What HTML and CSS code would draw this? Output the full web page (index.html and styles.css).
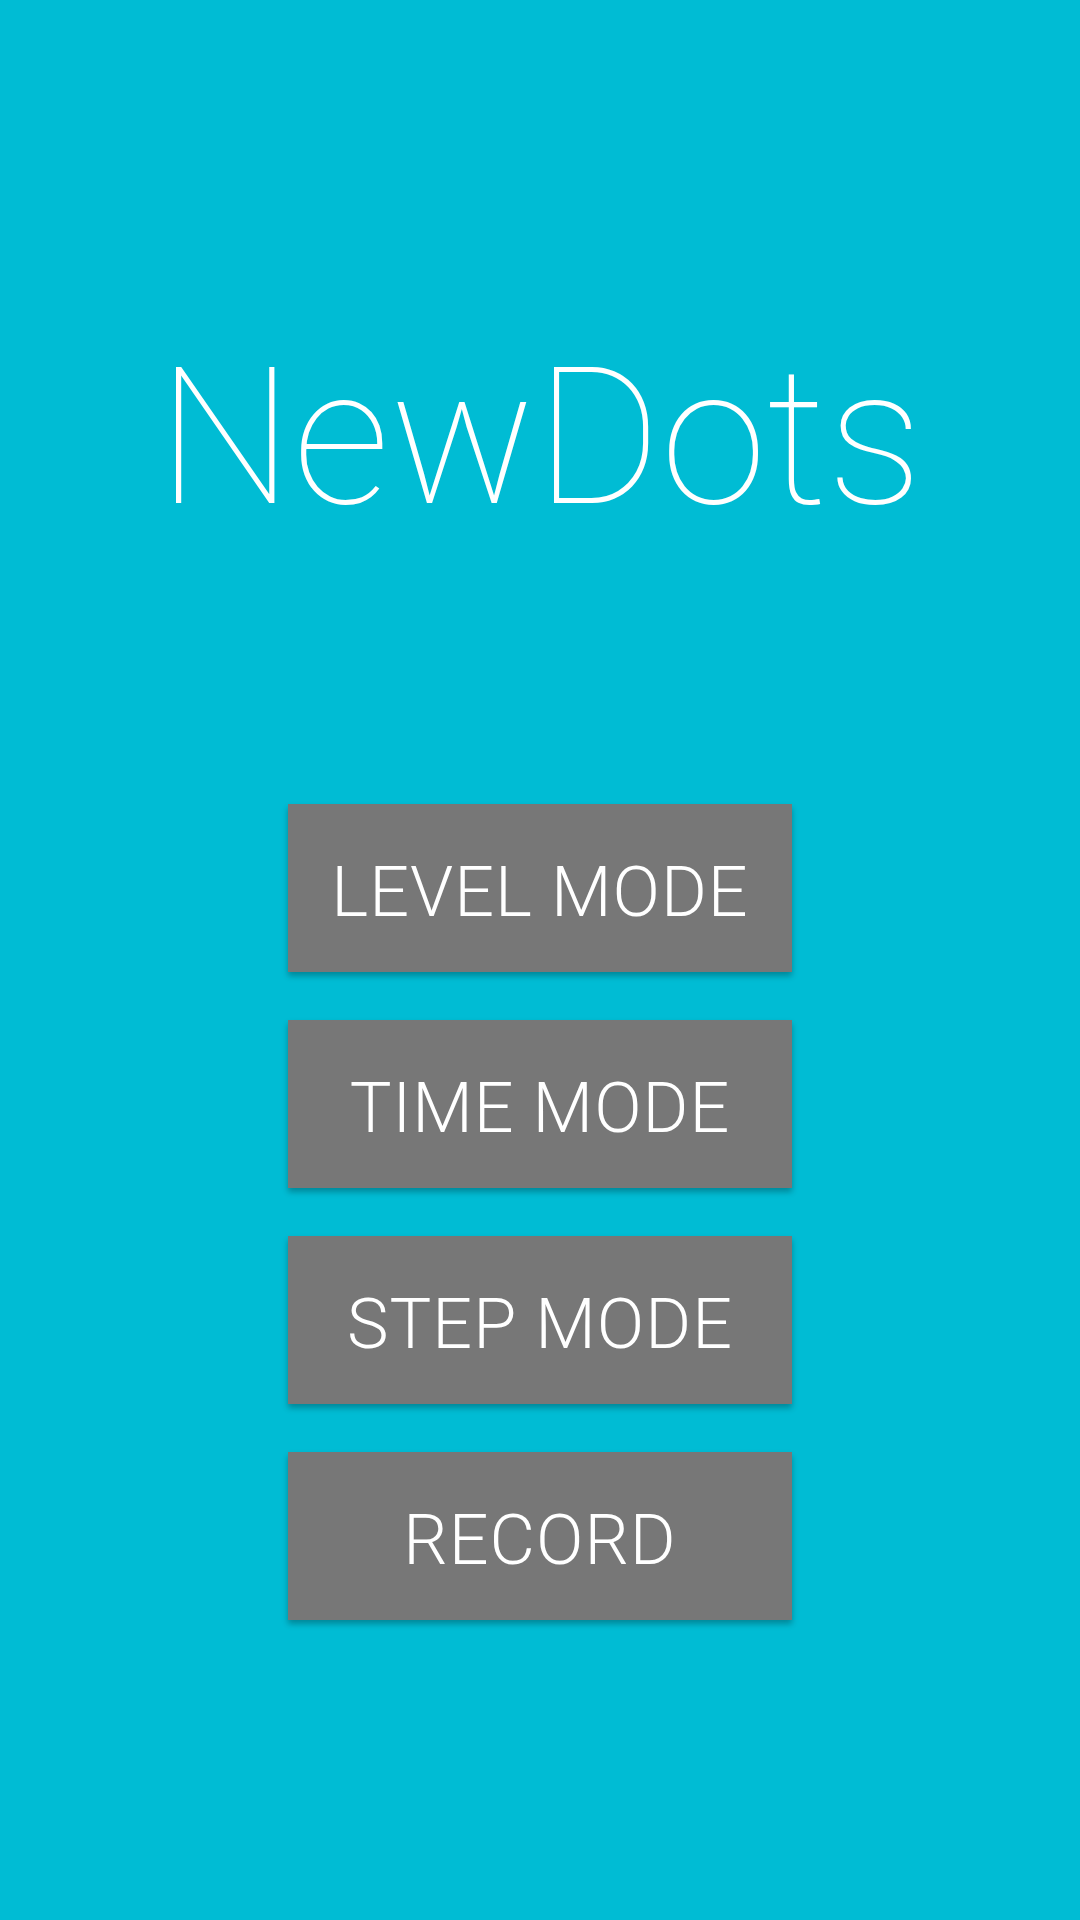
FILE: index.html
```html
<!DOCTYPE html>
<html>
<head>
<meta charset="utf-8">
<link rel="stylesheet" href="styles.css">
</head>
<body>
<div class="screen">
  <h1 class="title">NewDots</h1>
  <div class="menu">
    <div class="btn">LEVEL MODE</div>
    <div class="btn">TIME MODE</div>
    <div class="btn">STEP MODE</div>
    <div class="btn">RECORD</div>
  </div>
</div>
</body>
</html>
```
FILE: styles.css
```css
html, body {
  margin: 0;
  padding: 0;
  width: 1080px;
  height: 1920px;
  background: #00bcd4;
  overflow: hidden;
}
.screen {
  display: flex;
  flex-direction: column;
  align-items: center;
  padding-top: 342px;
  font-family: Roboto, "Noto Sans", sans-serif;
  color: #ffffff;
}
.title {
  margin: 0;
  font-size: 192px;
  line-height: 192px;
  font-weight: 100;
  height: 192px;
}
.menu {
  margin-top: 270px;
  display: flex;
  flex-direction: column;
  gap: 48px;
}
.btn {
  width: 504px;
  height: 168px;
  box-sizing: border-box;
  padding-top: 8px;
  background: #777777;
  display: flex;
  align-items: center;
  justify-content: center;
  font-size: 70px;
  font-weight: 300;
  letter-spacing: 1px;
  line-height: 1;
  box-shadow: 0 4px 6px rgba(0, 0, 0, 0.28);
}
```
